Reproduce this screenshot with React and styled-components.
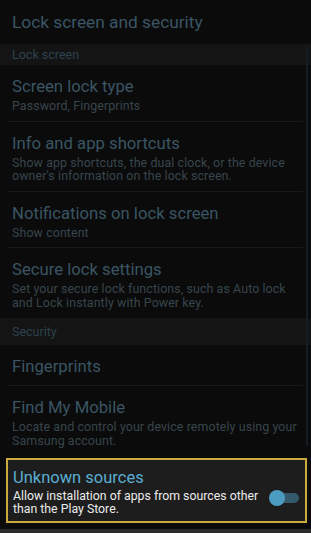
import React from 'react';
import styled, { createGlobalStyle } from 'styled-components';

const GlobalStyle = createGlobalStyle`
  html, body {
    margin: 0;
    padding: 0;
    background: #0b0b0b;
  }
  body {
    font-family: Roboto, 'Noto Sans', 'Liberation Sans', sans-serif;
    -webkit-font-smoothing: antialiased;
  }
`;

const Screen = styled.div`
  position: relative;
  width: 311px;
  height: 533px;
  overflow: hidden;
  background: #0b0b0b;
  display: flex;
  flex-direction: column;

  & > * {
    flex-shrink: 0;
  }
`;

const PageTitle = styled.div`
  height: 44px;
  display: flex;
  align-items: center;
  padding: 0 12px;
  font-size: 17.3px;
  color: #3a5563;
  box-sizing: border-box;
`;

const SectionBand = styled.div`
  height: ${(p) => p.$h || 21}px;
  display: flex;
  align-items: center;
  padding: 0 12px;
  background: #141414;
  font-size: 12.5px;
  color: #2c424e;
  box-sizing: border-box;
`;

const Item = styled.div`
  padding: 12px 4px 8px;
  margin: 0 8px;
  border-bottom: 1px solid ${(p) => (p.$last ? 'transparent' : '#191919')};
`;

const ItemTitle = styled.div`
  font-size: 16.7px;
  line-height: 20px;
  color: #3a5563;
`;

const ItemSub = styled.div`
  margin-top: 2px;
  font-size: 12.4px;
  letter-spacing: 0.1px;
  line-height: 13.5px;
  color: #37454c;
  white-space: nowrap;
`;

const Highlight = styled.div`
  margin: 2px 4px 0 6px;
  border: 2px solid #c9ab3f;
  background: #1d1d1d;
  display: flex;
  align-items: center;
  padding: 7px 6px 5px 5px;
`;

const HighlightText = styled.div`
  flex: 1;
`;

const HighlightTitle = styled.div`
  font-size: 16.5px;
  line-height: 21px;
  color: #5aaed2;
`;

const HighlightSub = styled.div`
  font-size: 12.3px;
  line-height: 13px;
  color: #ececec;
  margin-top: 2px;
  white-space: nowrap;
`;

const Toggle = styled.div`
  position: relative;
  width: 30px;
  height: 16px;
  margin: 12px 0 0 10px;
  flex-shrink: 0;
`;

const Track = styled.div`
  position: absolute;
  left: 4px;
  right: 0;
  top: 3px;
  height: 10px;
  border-radius: 5px;
  background: #34596b;
`;

const Knob = styled.div`
  position: absolute;
  left: 0;
  top: 0;
  width: 16px;
  height: 16px;
  border-radius: 50%;
  background: #4b9cc0;
`;

const Footer = styled.div`
  margin-top: auto;
  height: 4px;
  background: #2a2a2a;
`;

const Scrollbar = styled.div`
  position: absolute;
  right: 3px;
  top: 46px;
  width: 2px;
  height: 400px;
  background: #151d24;
`;

const lockItems = [
  { title: 'Screen lock type', sub: ['Password, Fingerprints'] },
  {
    title: 'Info and app shortcuts',
    sub: ["Show app shortcuts, the dual clock, or the device", "owner's information on the lock screen."],
  },
  { title: 'Notifications on lock screen', sub: ['Show content'] },
  {
    title: 'Secure lock settings',
    sub: ['Set your secure lock functions, such as Auto lock', 'and Lock instantly with Power key.'],
  },
];

const securityItems = [
  { title: 'Fingerprints', sub: [] },
  {
    title: 'Find My Mobile',
    sub: ['Locate and control your device remotely using your', 'Samsung account.'],
  },
];

const Row = ({ item, last }) => (
  <Item $last={last}>
    <ItemTitle>{item.title}</ItemTitle>
    {item.sub.length > 0 && (
      <ItemSub>
        {item.sub.map((line) => (
          <div key={line}>{line}</div>
        ))}
      </ItemSub>
    )}
  </Item>
);

export default function App() {
  return (
    <>
      <GlobalStyle />
      <Screen>
        <PageTitle>Lock screen and security</PageTitle>
        <SectionBand>Lock screen</SectionBand>
        {lockItems.map((it, i) => (
          <Row key={it.title} item={it} last={i === lockItems.length - 1} />
        ))}
        <SectionBand $h={27}>Security</SectionBand>
        {securityItems.map((it, i) => (
          <Row key={it.title} item={it} last={i === securityItems.length - 1} />
        ))}
        <Highlight>
          <HighlightText>
            <HighlightTitle>Unknown sources</HighlightTitle>
            <HighlightSub>
              <div>Allow installation of apps from sources other</div>
              <div>than the Play Store.</div>
            </HighlightSub>
          </HighlightText>
          <Toggle>
            <Track />
            <Knob />
          </Toggle>
        </Highlight>
        <Footer />
        <Scrollbar />
      </Screen>
    </>
  );
}
